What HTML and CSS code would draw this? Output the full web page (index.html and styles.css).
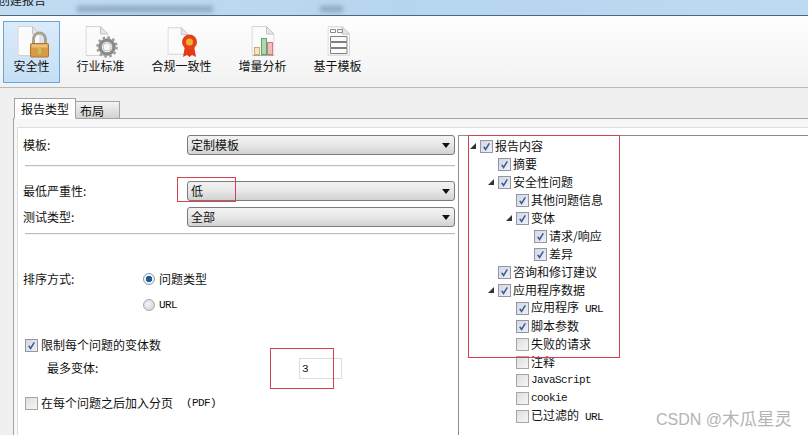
FILE: index.html
```html
<!DOCTYPE html>
<html lang="zh">
<head>
<meta charset="utf-8">
<title>创建报告</title>
<link rel="stylesheet" href="styles.css">
</head>
<body>
<svg class="defs" width="0" height="0" aria-hidden="true">
  <symbol id="check" viewBox="0 0 13 13"><path d="M3.200 6.800 5.400 10 9.800 2.800" fill="none" stroke="#fff" stroke-width="3" opacity=".7"/><path d="M3.200 6.800 5.400 10 9.800 2.800" fill="none" stroke="#3f5c9e" stroke-width="2"/></symbol>
  <symbol id="doc" viewBox="0 0 23 30">
    <path d="M.5.500H15L22.500 8V29.500H.5Z" fill="#fbfbfb" stroke="#d2d2d2"/>
    <path d="M15 .5V8H22.500Z" fill="#e6e6e6" stroke="#c4c4c4"/>
  </symbol>
</svg>
<div class="app">
  <header class="titlebar">
    <span class="title">创建报告</span>
    <i class="blur blur-a"></i>
    <i class="blur blur-b"></i>
  </header>

  <nav class="toolbar">
    <div class="tool selected">
      <svg class="tool-icon" viewBox="0 0 40 36">
        <use href="#doc" x="5.500" y="4" width="23" height="30"/>
        <path d="M21.500 22v-5a6 6 0 0 1 12 0v5" fill="none" stroke="#a9a196" stroke-width="3"/>
        <rect x="18.500" y="21.500" width="18" height="13.500" rx="1" fill="#d99a45" stroke="#b0752c"/>
        <rect x="19.500" y="22.500" width="16" height="3" fill="#edc078"/>
        <rect x="26" y="26" width="3" height="6" fill="#c9c05a"/>
      </svg>
      <span>安全性</span>
    </div>
    <div class="tool">
      <svg class="tool-icon" viewBox="0 0 40 36">
        <use href="#doc" x="4.500" y="4" width="23" height="30"/>
        <circle cx="26" cy="25" r="7" fill="#f5f5f5" stroke="#8b8b8b" stroke-width="3.500"/>
        <circle cx="26" cy="25" r="9.500" fill="none" stroke="#9b9b9b" stroke-width="2.500" stroke-dasharray="2.500 2.500"/>
        <circle cx="26" cy="25" r="4" fill="#f8f8f8" stroke="#c4c4c4"/>
      </svg>
      <span>行业标准</span>
    </div>
    <div class="tool">
      <svg class="tool-icon" viewBox="0 0 40 36">
        <use href="#doc" x="5.500" y="4" width="21" height="30"/>
        <path d="M23 24 21 35 25 33 27.500 35 30 33 34 35 32 24Z" fill="#e23b17"/>
        <circle cx="27.500" cy="20" r="7.500" fill="#e5401a"/>
        <circle cx="27.500" cy="20" r="3.500" fill="#f0b02c"/>
      </svg>
      <span>合规一致性</span>
    </div>
    <div class="tool">
      <svg class="tool-icon" viewBox="0 0 40 36">
        <use href="#doc" x="8.500" y="4" width="23" height="30"/>
        <rect x="11.500" y="25.500" width="5" height="7" fill="#f6e4bd" stroke="#d6a864"/>
        <rect x="18.500" y="16.500" width="5" height="16" fill="#a8dcae" stroke="#56a865"/>
        <rect x="24.500" y="20.500" width="5" height="12" fill="#f3bcbc" stroke="#d77878"/>
        <path d="M10 33.500H31" stroke="#a8a8a8"/>
      </svg>
      <span>增量分析</span>
    </div>
    <div class="tool">
      <svg class="tool-icon" viewBox="0 0 40 36">
        <use href="#doc" x="9.500" y="4" width="22.500" height="30"/>
        <path d="M12.500 7.500h5v3h-5zM19.500 7.500h5v3h-5z" fill="none" stroke="#8b8b8b"/>
        <path d="M12.500 14.500h16.500v5h-16.500zM12.500 20.500h16.500v5h-16.500zM12.500 26.500h16.500v5h-16.500z" fill="none" stroke="#808080"/>
      </svg>
      <span>基于模板</span>
    </div>
  </nav>

  <main class="workspace">
    <div class="tabs">
      <div class="tab active">报告类型</div>
      <div class="tab">布局</div>
    </div>
    <div class="tab-panel">
      <div class="panel-inner">
        <section class="form">
          <div class="form-row first-row">
            <span class="label">模板:</span>
            <div class="select"><span>定制模板</span><i class="arrow"></i></div>
          </div>
          <hr class="sep sep-a">
          <div class="form-row severity-row">
            <span class="label">最低严重性:</span>
            <div class="select"><span>低</span><i class="arrow"></i></div>
          </div>
          <div class="form-row test-row">
            <span class="label">测试类型:</span>
            <div class="select"><span>全部</span><i class="arrow"></i></div>
          </div>
          <hr class="sep sep-b">
          <div class="form-row sort-row">
            <span class="label label-sort">排序方式:</span>
            <span class="radio on"></span><span class="opt">问题类型</span>
          </div>
          <div class="form-row url-row">
            <span class="radio"></span><span class="opt mono">URL</span>
          </div>
          <div class="check-row limit-row">
            <span class="box"><svg><use href="#check"/></svg></span><span>限制每个问题的变体数</span>
          </div>
          <div class="form-row max-row">
            <span class="label-max">最多变体:</span>
            <div class="num">3</div>
          </div>
          <div class="check-row page-row">
            <span class="box"></span><span>在每个问题之后加入分页</span><span class="mono pdf">(PDF)</span>
          </div>
        </section>

        <section class="tree">
          <div class="node lv0"><i class="tw"></i><span class="box"><svg><use href="#check"/></svg></span><span>报告内容</span></div>
          <div class="node lv1 leaf"><span class="box"><svg><use href="#check"/></svg></span><span>摘要</span></div>
          <div class="node lv1"><i class="tw"></i><span class="box"><svg><use href="#check"/></svg></span><span>安全性问题</span></div>
          <div class="node lv2 leaf"><span class="box"><svg><use href="#check"/></svg></span><span>其他问题信息</span></div>
          <div class="node lv2"><i class="tw"></i><span class="box"><svg><use href="#check"/></svg></span><span>变体</span></div>
          <div class="node lv3 leaf"><span class="box"><svg><use href="#check"/></svg></span><span>请求/响应</span></div>
          <div class="node lv3 leaf"><span class="box"><svg><use href="#check"/></svg></span><span>差异</span></div>
          <div class="node lv1 leaf"><span class="box"><svg><use href="#check"/></svg></span><span>咨询和修订建议</span></div>
          <div class="node lv1"><i class="tw"></i><span class="box"><svg><use href="#check"/></svg></span><span>应用程序数据</span></div>
          <div class="node lv2 leaf"><span class="box"><svg><use href="#check"/></svg></span><span>应用程序<b class="mono url">URL</b></span></div>
          <div class="node lv2 leaf"><span class="box"><svg><use href="#check"/></svg></span><span>脚本参数</span></div>
          <div class="node lv2 leaf"><span class="box"></span><span>失败的请求</span></div>
          <div class="node lv2 leaf"><span class="box"></span><span>注释</span></div>
          <div class="node lv2 leaf"><span class="box"></span><span class="mono">JavaScript</span></div>
          <div class="node lv2 leaf"><span class="box"></span><span class="mono">cookie</span></div>
          <div class="node lv2 leaf"><span class="box"></span><span>已过滤的<b class="mono url">URL</b></span></div>
        </section>
      </div>
    </div>
  </main>
</div>
<div class="mark mark-a"></div>
<div class="mark mark-b"></div>
<div class="mark mark-c"></div>
<div class="watermark">CSDN @<span class="wm-cjk">木瓜星灵</span></div>
</body>
</html>
```
FILE: styles.css
```css
* { box-sizing: border-box; }
html, body { margin: 0; padding: 0; }
body {
  width: 808px;
  height: 435px;
  overflow: hidden;
  position: relative;
  background: #f0f0f0;
  color: #111;
  font: 12px/16px "Noto Sans CJK SC", "Liberation Sans", sans-serif;
}
.defs { position: absolute; }
.app { display: flex; flex-direction: column; height: 435px; }

/* title bar */
.titlebar {
  flex: none;
  height: 16px;
  display: flex;
  align-items: flex-start;
  overflow: hidden;
  background: linear-gradient(90deg, #c0dcf2, #b6d5ee 50%, #bcdaf2);
  border-bottom: 1px solid #4f6578;
}
.title { margin: -8px 0 0 -2px; line-height: 16px; color: #222; flex: none; }
.blur { flex: none; height: 6px; margin-top: 6px; background: #8ba6bf; filter: blur(2.5px); }
.blur-a { margin-left: 31px; width: 136px; }
.blur-b { margin-left: 107px; width: 23px; }

/* toolbar */
.toolbar {
  flex: none;
  height: 72px;
  display: flex;
  gap: 6px;
  padding: 5px 3px 4px;
  background: linear-gradient(#fefefe, #f7f7f7 60%, #f1f1f1);
  border-bottom: 1px solid #b9b9b9;
}
.tool {
  height: 62px;
  padding: 0 9.5px;
  display: flex;
  flex-direction: column;
  align-items: center;
  border: 1px solid transparent;
  font-size: 12px;
  white-space: nowrap;
}
.tool.selected { background: linear-gradient(#dbebf9, #c6dff5); border-color: #66a7dd; }
.tool-icon { width: 40px; height: 36px; flex: none; margin: 0 -10px; }

/* tabs */
.workspace { flex: 1; display: flex; flex-direction: column; padding: 10px 0 0 13px; min-height: 0; }
.tabs { flex: none; display: flex; align-items: flex-end; height: 21px; padding-left: 1px; margin-bottom: -1px; position: relative; z-index: 1; }
.tab {
  height: 18px;
  width: 44px;
  padding-left: 4px;
  line-height: 17px;
  font-size: 12px;
  border: 1px solid #a3a3a3;
  border-left: 0;
  background: linear-gradient(#f3f3f3, #d2d2d2);
}
.tab.active {
  height: 21px;
  width: 62px;
  padding-left: 6px;
  line-height: 19px;
  background: #fff;
  border-left: 1px solid #a3a3a3;
  border-bottom-color: #fff;
}

/* panel */
.tab-panel {
  flex: 1;
  min-height: 0;
  border: 1px solid #a3a3a3;
  border-width: 1px 0 0 1px;
  padding: 8px 0 0 3px;
  background: #f7f7f7;
}
.panel-inner { height: 100%; display: flex; background: #fff; border: 1px solid #dedede; border-width: 1px 0 0 1px; }

/* form */
.form { flex: none; width: 440px; padding-top: 7px; }
.form-row { display: flex; align-items: center; padding-left: 5px; }
.label { width: 164px; font-size: 12px; }
.select {
  width: 268px;
  height: 20px;
  padding: 0 4px 0 3px;
  display: flex;
  align-items: center;
  justify-content: space-between;
  border: 1px solid #7b7b7b;
  border-radius: 3px;
  background: linear-gradient(#f2f2f2, #e9e9e9 45%, #d2d2d2);
}
.arrow { width: 0; height: 0; border: 4px solid transparent; border-top: 5px solid #111; border-bottom: 0; }
.sep { height: 0; width: 430px; margin: 0 0 0 7px; border: 0; border-top: 1px solid #bdbdbd; border-bottom: 1px solid #f4f4f4; }
.sep-a { margin-top: 10px; }
.severity-row { margin-top: 14px; }
.test-row { margin-top: 6px; }
.sep-b { margin-top: 6px; }
.sort-row { margin-top: 36px; height: 16px; }
.label-sort { width: 120px; }
.url-row { margin-top: 10px; height: 16px; padding-left: 125px; }
.radio {
  width: 12px;
  height: 12px;
  flex: none;
  border-radius: 50%;
  border: 1px solid #a8a8a8;
  background: radial-gradient(circle at 40% 40%, #f4f4f4, #cfcfcf);
}
.radio.on { background: radial-gradient(circle, #1f5f8f 0 3px, #eef4f8 3.5px); border-color: #8a9aa8; }
.opt { margin-left: 4px; }
.mono { font-family: "Liberation Mono", "DejaVu Sans Mono", monospace; font-weight: 400; font-size: 11px; letter-spacing: -.6px; }
.url { margin-left: 6px; }
.check-row { display: flex; align-items: center; gap: 3px; padding-left: 7px; height: 16px; }
.limit-row { margin-top: 24px; }
.max-row { margin-top: 5px; padding-left: 29px; height: 20px; }
.label-max { width: 252px; }
.num {
  width: 43px;
  height: 21px;
  padding: 2px 0 0 2px;
  font-family: "Liberation Mono", monospace;
  font-size: 11px;
  border: 1px solid #dcdcdc;
}
.page-row { margin-top: 17px; }
.pdf { margin-left: 10px; }

.box {
  width: 13px;
  height: 13px;
  flex: none;
  display: block;
  border: 1px solid #a6a6a6;
  background: linear-gradient(135deg, #dedede, #f6f6f6);
}
.box:has(svg) { border-color: #9496a6; background: linear-gradient(135deg, #d4d6e2, #eef0f4); }
.box svg { width: 11px; height: 11px; display: block; }

/* tree */
.tree { flex: 1; margin-top: 7px; padding-top: 1px; background: #fff; border: 1px solid #8d8d8d; border-width: 1px 0 0 1px; }
.node { height: 18px; display: flex; align-items: center; gap: 2px; white-space: nowrap; }
.lv0 { padding-left: 7px; }
.lv1 { padding-left: 25px; }
.lv2 { padding-left: 43px; }
.lv3 { padding-left: 61px; }
.lv1.leaf { padding-left: 39px; }
.lv2.leaf { padding-left: 57px; }
.lv3.leaf { padding-left: 75px; }
.tw { width: 12px; flex: none; height: 8px; position: relative; }
.tw::after {
  content: "";
  position: absolute;
  left: 4px;
  top: 1px;
  border-left: 6px solid transparent;
  border-bottom: 6px solid #333;
}

/* red annotation boxes drawn over the screenshot */
.mark { position: absolute; border: 1px solid #d8404f; }
.mark-a { left: 177px; top: 177px; width: 59px; height: 25px; }
.mark-b { left: 270px; top: 348px; width: 64px; height: 41px; }
.mark-c { left: 468px; top: 135px; width: 152px; height: 223px; }
.watermark {
  position: absolute;
  left: 656px;
  top: 408px;
  font: 16px/20px "Liberation Sans", "Noto Sans CJK SC", sans-serif;
  color: #b4b4b4;
  white-space: nowrap;
}
.wm-cjk { font-family: "Noto Sans CJK SC", sans-serif; font-size: 17.5px; }
```
